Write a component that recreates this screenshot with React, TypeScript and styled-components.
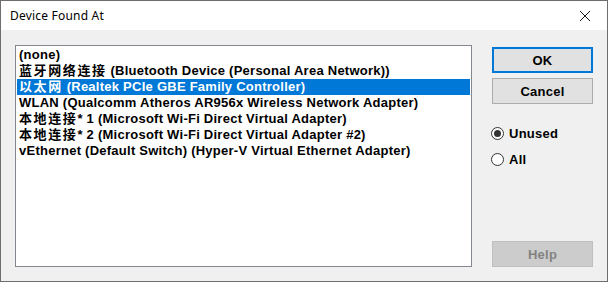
import React, { useState } from 'react';
import styled, { createGlobalStyle } from 'styled-components';

const GlobalStyle = createGlobalStyle`
  html, body {
    margin: 0;
    padding: 0;
    background: #ffffff;
  }
  * {
    box-sizing: border-box;
  }
`;

const adapters = [
  { cjk: '', text: '(none)' },
  { cjk: '蓝牙网络连接', text: ' (Bluetooth Device (Personal Area Network))' },
  { cjk: '以太网', text: ' (Realtek PCIe GBE Family Controller)' },
  { cjk: '', text: 'WLAN (Qualcomm Atheros AR956x Wireless Network Adapter)' },
  { cjk: '本地连接', text: '* 1 (Microsoft Wi-Fi Direct Virtual Adapter)' },
  { cjk: '本地连接', text: '* 2 (Microsoft Wi-Fi Direct Virtual Adapter #2)' },
  { cjk: '', text: 'vEthernet (Default Switch) (Hyper-V Virtual Ethernet Adapter)' },
];

export default function App() {
  const [selected, setSelected] = useState(2);
  const [mode, setMode] = useState<'unused' | 'all'>('unused');

  return (
    <>
      <GlobalStyle />
      <Window>
        <TitleBar>
          <Title>Device Found At</Title>
          <CloseButton aria-label="Close">
            <svg width="12" height="12" viewBox="0 0 12 12">
              <path d="M1 1 L11 11 M11 1 L1 11" stroke="#1a1a1a" strokeWidth="1" fill="none" />
            </svg>
          </CloseButton>
        </TitleBar>
        <Body>
          <ListBox>
            {adapters.map((item, i) => (
              <ListItem key={i} $selected={i === selected} onClick={() => setSelected(i)}>
                {item.cjk && <Cjk>{item.cjk}</Cjk>}
                {item.text}
              </ListItem>
            ))}
          </ListBox>
          <SideColumn>
            <Button $focused>OK</Button>
            <Button>Cancel</Button>
            <RadioGroup>
              <RadioRow onClick={() => setMode('unused')}>
                <RadioCircle $checked={mode === 'unused'} />
                Unused
              </RadioRow>
              <RadioRow onClick={() => setMode('all')}>
                <RadioCircle $checked={mode === 'all'} />
                All
              </RadioRow>
            </RadioGroup>
            <Spacer />
            <Button disabled>Help</Button>
          </SideColumn>
        </Body>
      </Window>
    </>
  );
}

const Window = styled.div`
  width: 608px;
  height: 282px;
  border: 1px solid #6e6e6e;
  display: flex;
  flex-direction: column;
  background: #f0f0f0;
  overflow: hidden;
`;

const TitleBar = styled.div`
  height: 29px;
  background: #ffffff;
  display: flex;
  align-items: center;
  justify-content: space-between;
  padding: 0 0 0 9px;
`;

const Title = styled.span`
  font-family: 'Noto Sans', 'Open Sans', sans-serif;
  font-size: 12px;
  letter-spacing: 0.2px;
  color: #000000;
  margin-top: -1px;
`;

const CloseButton = styled.div`
  width: 46px;
  height: 29px;
  display: flex;
  align-items: center;
  justify-content: center;
  padding-left: 2px;
`;

const Body = styled.div`
  flex: 1;
  display: flex;
  padding: 15px 14px 14px 14px;
  gap: 20px;
`;

const ListBox = styled.div`
  width: 457px;
  height: 222px;
  background: #ffffff;
  border: 1px solid #828790;
  padding: 1px 1px;
  display: flex;
  flex-direction: column;
`;

const ListItem = styled.div<{ $selected?: boolean }>`
  height: 16px;
  line-height: 16px;
  padding-left: 2px;
  white-space: nowrap;
  font-family: 'Liberation Sans', Arial, sans-serif;
  font-weight: bold;
  font-size: 13px;
  letter-spacing: 0.25px;
  color: ${(p) => (p.$selected ? '#ffffff' : '#000000')};
  background: ${(p) => (p.$selected ? '#0078d7' : 'transparent')};
  cursor: default;
`;

const Cjk = styled.span`
  line-height: 1;
  font-family: 'Noto Sans CJK SC', sans-serif;
  font-weight: bold;
  font-size: 13px;
  letter-spacing: 1.6px;
`;

const SideColumn = styled.div`
  width: 101px;
  display: flex;
  flex-direction: column;
  padding-top: 2px;
  gap: 5px;
`;

const Button = styled.button<{ $focused?: boolean }>`
  width: 101px;
  height: 26px;
  padding: 0;
  font-family: 'Liberation Sans', Arial, sans-serif;
  font-weight: bold;
  font-size: 13px;
  letter-spacing: 0.25px;
  color: #000000;
  background: #e1e1e1;
  border: ${(p) => (p.$focused ? '2px solid #0078d7' : '1px solid #adadad')};
  cursor: default;

  &:disabled {
    background: #cccccc;
    border: 1px solid #bfbfbf;
    color: #838383;
  }
`;

const RadioGroup = styled.div`
  display: flex;
  flex-direction: column;
  gap: 10px;
  margin-top: 16px;
`;

const RadioRow = styled.label`
  display: flex;
  align-items: center;
  gap: 5px;
  height: 16px;
  font-family: 'Liberation Sans', Arial, sans-serif;
  font-weight: bold;
  font-size: 13px;
  letter-spacing: 0.25px;
  color: #000000;
  margin-left: -1px;
`;

const RadioCircle = styled.span<{ $checked?: boolean }>`
  width: 13px;
  height: 13px;
  border-radius: 50%;
  border: 1px solid #333333;
  background: #ffffff;
  display: flex;
  align-items: center;
  justify-content: center;

  &::after {
    content: '';
    width: 7px;
    height: 7px;
    border-radius: 50%;
    background: #333333;
    display: ${(p) => (p.$checked ? 'block' : 'none')};
  }
`;

const Spacer = styled.div`
  flex: 1;
`;
